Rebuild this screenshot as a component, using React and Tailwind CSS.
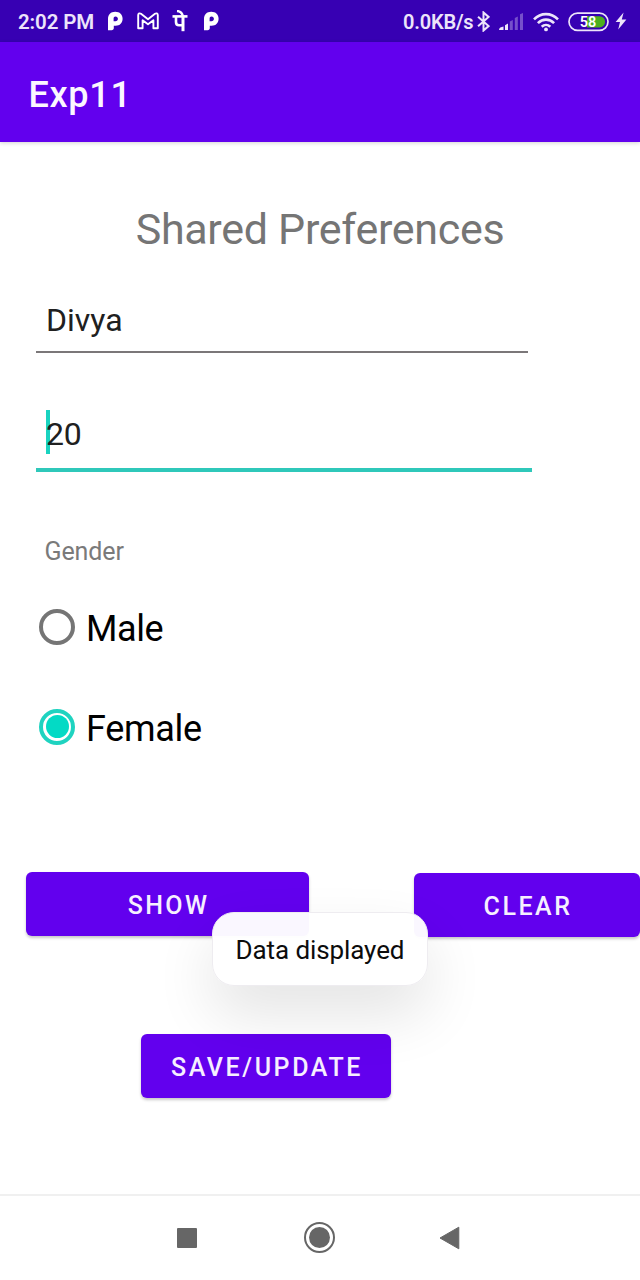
function PayMark() {
  return (
    <svg width="16" height="20" viewBox="0 0 16 20">
      <path fillRule="evenodd" fill="#fff" d="M1 19.2V8C1 3.6 3.8 .8 8.2 .8C12.8 .8 15.6 3.6 15.6 7.8C15.6 12 12.8 14.8 8.6 14.8H6.8V17C6.8 18.4 6 19.2 4.6 19.2ZM6.6 10.2H8.4C10 10.2 10.9 9.3 10.9 7.8C10.9 6.3 10 5.4 8.6 5.4C7.2 5.4 6.6 6.2 6.6 7.6Z" />
    </svg>
  );
}

function MailMark() {
  return (
    <svg width="22" height="18" viewBox="0 0 22 18" fill="none">
      <path d="M1.2 16.2V3C1.2 1.4 2.8 .9 4 1.8L11 7.2L18 1.8C19.2 .9 20.8 1.4 20.8 3V16.2H16.4V8.2L11 12.2L5.6 8.2V16.2Z" stroke="#fff" strokeWidth="1.9" strokeLinejoin="round" />
    </svg>
  );
}

function RupeeAppMark() {
  return (
    <svg width="16" height="22" viewBox="0 0 16 22" fill="none" stroke="#fff">
      <path d="M.5 6.4H15.5" strokeWidth="2.6" />
      <path d="M11 5.6V21.2" strokeWidth="3" />
      <path d="M4 7V12C4 14.2 5.2 15.2 7 15.2H11" strokeWidth="2.6" />
      <path d="M5 1C7.8 1.2 10 2.8 10.8 5.8" strokeWidth="2.4" />
    </svg>
  );
}

function BluetoothIcon() {
  return (
    <svg width="13" height="21" viewBox="0 0 12 20" fill="none">
      <path d="M.8 5.4L10.8 14.4L6 18.6V1.4L10.8 5.6L.8 14.6" stroke="#ece4fa" strokeWidth="1.9" />
    </svg>
  );
}

function SignalIcon() {
  return (
    <svg width="25" height="18" viewBox="0 0 25 18" fill="#ece4fa">
      <path d="M0 17C0 15 2 14 4.5 13.6V17Z" />
      <path d="M6 12.2L9 10.4V17H6Z" />
      <g opacity=".35">
        <path d="M10.8 8.4L13.8 7V17H10.8Z" />
        <path d="M15.8 5L18.8 3.6V17H15.8Z" />
        <path d="M21 1.2L24 0V17H21Z" />
      </g>
    </svg>
  );
}

function WifiIcon() {
  return (
    <svg width="26" height="20" viewBox="0 0 26 20" fill="none" stroke="#ece4fa" strokeWidth="2.6">
      <path d="M1 7.4C7.8 .4 18.2 .4 25 7.4" />
      <path d="M4.9 11.2C9.6 6.4 16.4 6.4 21.1 11.2" />
      <path d="M8.7 14.8C11.2 12.4 14.8 12.4 17.3 14.8" />
      <circle cx="13" cy="17.4" r="1.9" fill="#ece4fa" stroke="none" />
    </svg>
  );
}

function StatusBar() {
  return (
    <header className="flex h-[42px] shrink-0 items-center bg-[#3700b3] pl-[18px] text-[#ece4fa]">
      <div className="mt-[2px] w-[89px] text-[20.5px] font-semibold leading-[43px] tracking-[-0.1px] whitespace-nowrap">2:02 PM</div>
      <div className="flex items-center">
        <PayMark />
        <div className="mt-[-1px] ml-[14px]"><MailMark /></div>
        <div className="ml-[13px]"><RupeeAppMark /></div>
        <div className="ml-[15px]"><PayMark /></div>
      </div>
      <div className="ml-auto flex items-center pr-[13px]">
        <div className="mt-[3px] w-[74px] text-[20px] font-semibold leading-[43px] tracking-[-0.2px] whitespace-nowrap">0.0KB/s</div>
        <BluetoothIcon />
        <div className="mt-[1px] ml-[9px]"><SignalIcon /></div>
        <div className="mt-[1px] ml-[9px]"><WifiIcon /></div>
        <svg className="mt-[1px] ml-[9px]" width="41" height="20" viewBox="0 0 41 20" fill="none">
          <rect x="1" y="1.2" width="39" height="17.2" rx="8.6" stroke="#ece4fa" strokeWidth="1.7" />
          <path d="M19 4.2H31.5A5.6 5.6 0 0 1 31.5 15.4H19Z" fill="#4caf1e" />
          <text x="20" y="14.7" textAnchor="middle" fill="#fff" fontFamily="Roboto, sans-serif" fontWeight="600" fontSize="14.5">58</text>
        </svg>
        <svg className="ml-[6px]" width="12" height="18" viewBox="0 0 12 18">
          <path d="M8.6 .6L.6 10H5L3.2 17.4L11.4 7.6H6.8Z" fill="#ece4fa" />
        </svg>
      </div>
    </header>
  );
}

function Button({ className, children }) {
  return (
    <button className={`h-16 shrink-0 rounded-[6px] bg-[#6200ee] text-center text-[25px] leading-[67px] font-medium whitespace-nowrap text-[#f6efff] shadow-[0_2px_3px_rgba(0,0,0,0.22)] ${className}`}>
      {children}
    </button>
  );
}

export default function App() {
  return (
    <div className="relative flex h-[1280px] w-[640px] flex-col overflow-hidden bg-white font-[Roboto,sans-serif]">
      <StatusBar />
      <div className="flex h-[100px] shrink-0 items-center bg-[#6200ee] pl-[28.5px] shadow-[0_1px_4px_rgba(0,0,0,0.18)]">
        <h1 className="pt-[6px] text-[36px] leading-[48px] font-medium tracking-[0.7px] text-[#fbf7ff]">Exp11</h1>
      </div>
      <main className="flex grow flex-col">
        <h2 className="mt-[61px] h-[53px] text-center text-[43px] leading-[52px] tracking-[-0.3px] text-[#757575]">Shared Preferences</h2>
        <div className="mt-[41px] ml-9 h-14 w-[492px] border-b-2 border-[#7b7779] pl-[10px] text-[32px] leading-[47px] text-[#202020]">Divya</div>
        <div className="mt-[56px] ml-9 flex h-[63px] w-[496px] items-start border-b-4 border-[#2fc8ba] pl-[10px] text-[32px] leading-[50px] text-[#202020]">
          <span className="mt-[1px] -mr-[4px] h-11 w-1 bg-[#19d3c0]" />
          <span className="tracking-[-0.3px]">20</span>
        </div>
        <div className="mt-[64px] ml-[44.5px] h-8 text-[25px] leading-8 tracking-[-0.1px] text-[#7a7a7a]">Gender</div>
        <label className="mt-[41px] ml-[39px] flex h-[40px] items-center text-[36px] leading-[40px] text-black">
          <span className="-mt-[4px] mr-[11px] size-9 rounded-full border-4 border-[#757575]" />
          <span className="tracking-[-0.4px]">Male</span>
        </label>
        <label className="mt-[60px] ml-[39px] flex h-[40px] items-center text-[36px] leading-[40px] text-black">
          <span className="-mt-[5px] mr-[11px] flex size-9 items-center justify-center rounded-full border-4 border-[#1fd3c0]">
            <span className="size-[23px] rounded-full bg-[#03dac5]" />
          </span>
          <span className="tracking-[-0.3px]">Female</span>
        </label>
        <div className="mt-[123px] ml-[26px] flex items-start justify-between">
          <Button className="w-[283px] pl-[2px] tracking-[2.4px]">SHOW</Button>
          <Button className="mt-[1px] w-[226px] pl-[2px] tracking-[2.5px]">CLEAR</Button>
        </div>
        <Button className="mt-[97px] ml-[141px] w-[250px] pl-[2px] tracking-[2.6px]">SAVE/UPDATE</Button>
      </main>
      <nav className="flex h-[86px] shrink-0 items-center border-t-2 border-[#f0f0f0]">
        <span className="-mt-[1px] ml-[177px] size-5 rounded-[1px] bg-[#666]" />
        <span className="-mt-[1px] ml-[107px] flex size-[31px] items-center justify-center rounded-full border-[2.5px] border-[#666]">
          <span className="size-[21px] rounded-full bg-[#666]" />
        </span>
        <svg className="ml-[104px]" width="21" height="24" viewBox="0 0 21 24">
          <path d="M1 12L19.8 1.2V22.8Z" fill="#666" stroke="#666" strokeLinejoin="round" />
        </svg>
      </nav>
      <div className="absolute top-[912px] left-[212px] h-[74px] w-[216px] rounded-[22px] border border-[#eeecf0] bg-white/97 text-center text-[26px] leading-[75px] tracking-[-0.1px] whitespace-nowrap text-[#0c0c0c] shadow-[0_28px_60px_rgba(0,0,0,0.11)]">
        Data displayed
      </div>
    </div>
  );
}
